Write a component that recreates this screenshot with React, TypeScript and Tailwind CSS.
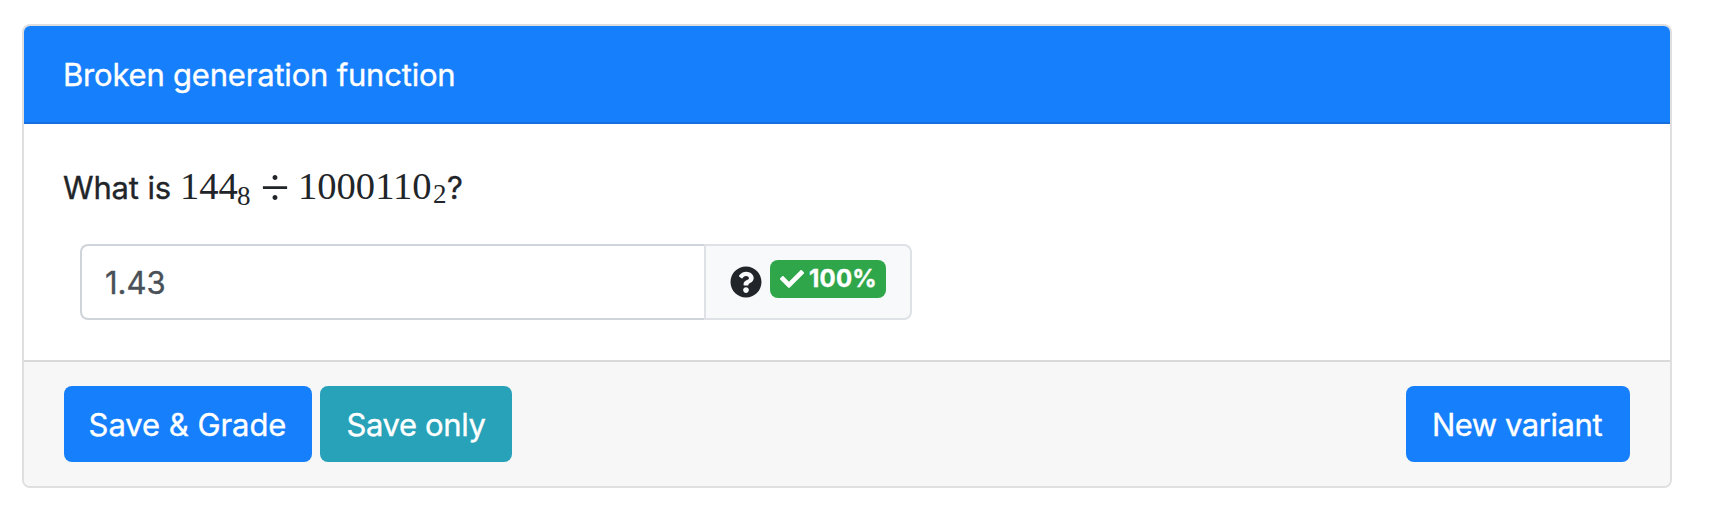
import type { ReactNode } from "react";
import { FaCheck, FaQuestionCircle } from "react-icons/fa";

function Digits({ children, className }: { children: ReactNode; className: string }) {
  return <span className={`block text-[38.6px] ${className}`}>{children}</span>;
}

function Subscript({ children, className }: { children: ReactNode; className: string }) {
  return <span className={`relative block w-[15px] text-[27px] ${className}`}>{children}</span>;
}

function Question() {
  return (
    <p className="flex h-12 items-baseline whitespace-nowrap leading-[48px]">
      <span className="-ml-px block w-[117px] tracking-[-0.15px]">What is</span>
      <span className="flex items-baseline font-['Liberation_Serif',serif] [-webkit-text-stroke:0px]">
        <Digits className="w-[57px]">144</Digits>
        <Subscript className="top-[6px]">8</Subscript>
        <span className="relative top-[6px] block w-[46px] text-center text-[52px] leading-[48px]">÷</span>
        <Digits className="w-[135px]">1000110</Digits>
        <Subscript className="top-[4px]">2</Subscript>
      </span>
      <span className="-ml-px block">?</span>
    </p>
  );
}

function Button({ children, className }: { children: ReactNode; className: string }) {
  return (
    <button
      type="button"
      className={`flex h-[76px] items-center justify-center whitespace-nowrap rounded-lg pt-[2px] text-white ${className}`}
    >
      {children}
    </button>
  );
}

export default function App() {
  return (
    <main className="h-[532px] bg-white pl-[22px] pt-6 font-['Inter',sans-serif] text-[31px] leading-[48px] text-[#212529] [-webkit-text-stroke:0.35px]">
      <section className="flex h-[464px] w-[1650px] flex-col overflow-hidden rounded-lg border-2 border-[#dfdfdf] bg-white">
        <header className="h-[98px] border-b-2 border-[#146fdf] bg-[#167ffc] pl-[39px] pt-[25px] tracking-[-0.2px] text-white">
          Broken generation function
        </header>

        <div className="h-[236px] px-10 pt-[34px]">
          <Question />
          <div className="ml-4 mt-[38px] flex h-[76px] w-[832px]">
            <input
              type="text"
              aria-label="Answer"
              defaultValue="1.43"
              className="w-[624px] rounded-l-lg border-2 border-r-0 border-[#ced4da] bg-white pl-[23px] pr-[22px] pt-[2px] text-[#495057] outline-none"
            />
            <div className="flex flex-1 rounded-r-lg border-2 border-[#dee2e6] bg-[#f8f9fb] pl-6">
              <FaQuestionCircle className="mt-5 size-8" />
              <span className="ml-2 mt-[14px] flex h-[38px] w-[116px] items-center rounded-lg bg-[#30a64a] pl-[10px] text-[24px] font-bold leading-6 text-white">
                <FaCheck className="size-6" />
                <span className="ml-[5px] tracking-[0.2px]">100%</span>
              </span>
            </div>
          </div>
        </div>

        <footer className="flex flex-1 items-start border-t-2 border-[#d9d9d9] bg-[#f7f7f7] px-10 pt-6">
          <Button className="w-[248px] bg-[#167ffc] pr-px tracking-[-0.05px]">Save &amp; Grade</Button>
          <Button className="ml-2 w-[192px] bg-[#27a2b8] tracking-[-0.4px]">Save only</Button>
          <Button className="ml-auto w-[224px] bg-[#167ffc] pr-[2px] tracking-[-0.45px]">New variant</Button>
        </footer>
      </section>
    </main>
  );
}
